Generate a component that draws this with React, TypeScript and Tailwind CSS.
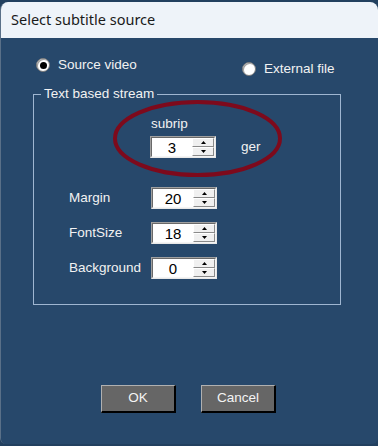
import React from "react";

function Radio({ checked, label }: { checked: boolean; label: string }) {
  return (
    <div className="flex items-center">
      <div className="w-[14px] h-[14px] rounded-full bg-white border border-[#7a7a7a] flex items-center justify-center shadow-[inset_1px_1px_0_#a0a0a0]">
        {checked && <div className="w-[7px] h-[7px] rounded-full bg-black" />}
      </div>
      <span className="ml-[8px] leading-[14px]">{label}</span>
    </div>
  );
}

function Arrow({ up }: { up: boolean }) {
  return (
    <svg width="5" height="3" viewBox="0 0 5 3" className="block">
      {up ? <polygon points="2.5,0 5,3 0,3" fill="#000" /> : <polygon points="0,0 5,0 2.5,3" fill="#000" />}
    </svg>
  );
}

function Spin({ value }: { value: string }) {
  return (
    <div className="w-[66px] h-[22px] border border-t-[#a0a0a0] border-l-[#a0a0a0] border-b-[#e8e8e8] border-r-[#e8e8e8] bg-[#e8e8e8]">
      <div className="w-full h-full flex border border-t-[#696969] border-l-[#696969] border-b-[#f4f4f4] border-r-[#f4f4f4] bg-white">
        <div className="flex-1 flex items-center justify-center text-black text-[15px] leading-none pt-[1px]">{value}</div>
        <div className="w-[22px] flex flex-col bg-[#f0f0f0]">
          <div className="flex-1 flex items-center justify-center border border-t-white border-l-white border-b-[#8a8a8a] border-r-[#8a8a8a]">
            <Arrow up />
          </div>
          <div className="flex-1 flex items-center justify-center border border-t-white border-l-white border-b-[#8a8a8a] border-r-[#8a8a8a]">
            <Arrow up={false} />
          </div>
        </div>
      </div>
    </div>
  );
}

function Row({ label, value }: { label: string; value: string }) {
  return (
    <div className="flex items-center h-[22px] pl-[35px]">
      <span className="w-[82px] leading-[14px]">{label}</span>
      <Spin value={value} />
    </div>
  );
}

function Btn({ label }: { label: string }) {
  return (
    <div className="w-[75px] h-[28px] bg-[#666666] border-t border-l border-t-[#b0b0b0] border-l-[#b0b0b0] border-b-2 border-r-2 border-b-black border-r-black flex items-center justify-center text-[#f4f4f4] text-[13.5px]">
      {label}
    </div>
  );
}

export default function App() {
  return (
    <div className="relative w-[378px] h-[446px] bg-[#22405f] pt-[2px] overflow-hidden" style={{ fontFamily: '"Liberation Sans", Arial, sans-serif' }}>
      <div className="h-[442px] rounded-t-[8px] rounded-b-[6px] overflow-hidden border-l border-[#5a7088] flex flex-col">
        <div className="h-[36px] bg-[#eef3f9] flex items-center pl-[10px] text-[14.5px] text-[#1a1a1a]" style={{ fontFamily: '"Noto Sans", "Open Sans", sans-serif' }}>
          Select subtitle source
        </div>
        <div className="flex-1 bg-[#27486b] text-[#f2f2f2] text-[13.5px] flex flex-col pt-[20px]">
          <div className="flex h-[36px] pl-[35px]">
            <div className="w-[206px]">
              <Radio checked label="Source video" />
            </div>
            <div className="pt-[4px]">
              <Radio checked={false} label="External file" />
            </div>
          </div>
          <div className="relative ml-[32px] w-[308px] h-[211px] border border-[#9fb6d1] flex flex-col">
            <div className="absolute left-[7px] top-[-8px] px-[3px] bg-[#27486b] leading-[14px]">Text based stream</div>
            <div className="pl-[117px] pt-[22px] leading-[14px]">subrip</div>
            <div className="flex items-center pl-[116px] mt-[5px]">
              <Spin value="3" />
              <span className="ml-[25px] leading-[14px]">ger</span>
            </div>
            <div className="mt-[29px] flex flex-col gap-[13px]">
              <Row label="Margin" value="20" />
              <Row label="FontSize" value="18" />
              <Row label="Background" value="0" />
            </div>
          </div>
          <div className="flex pl-[100px] gap-[25px] mt-[80px]">
            <Btn label="OK" />
            <Btn label="Cancel" />
          </div>
        </div>
      </div>
      <svg className="absolute left-[111px] top-[98px]" width="174" height="82" viewBox="0 0 174 82">
        <ellipse cx="86.5" cy="40.5" rx="82.5" ry="36.5" fill="none" stroke="#7d0a1c" strokeWidth="4" />
      </svg>
    </div>
  );
}
